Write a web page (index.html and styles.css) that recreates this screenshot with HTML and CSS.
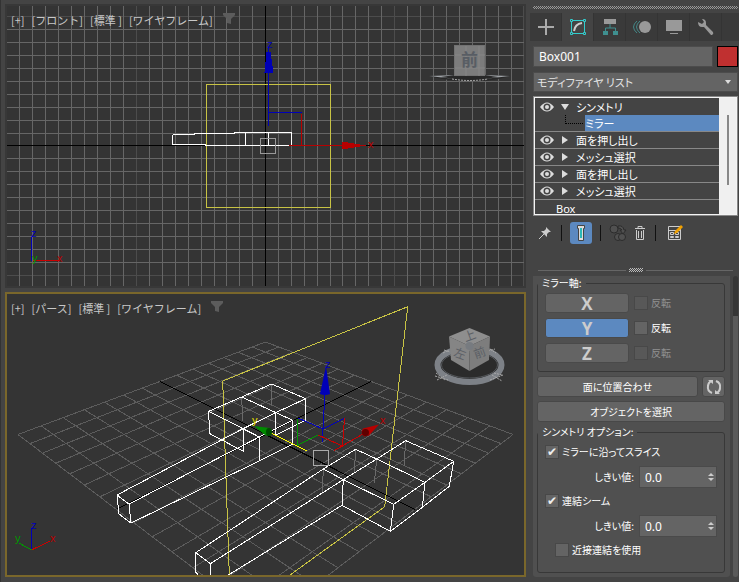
FILE: index.html
```
<!DOCTYPE html>
<html lang="ja">

<head>
    <meta charset="UTF-8">
    <meta name="viewport" content="width=device-width, initial-scale=1.0">
    <title>シンメトリ モディファイヤ</title>
    <link rel="stylesheet" href="styles.css">
</head>

<body>
    <!-- shared icons -->
    <svg class="defs" width="0" height="0" aria-hidden="true">
        <symbol id="funnel" viewBox="0 0 12 12">
            <path d="M0 0h12v2L8 6v5l-4-1V6L0 2z" fill="#5c5c5c" />
        </symbol>
        <symbol id="eye" viewBox="0 0 14 10">
            <path d="M0 5Q7-4 14 5Q7 14 0 5z" fill="#ddd" />
            <circle cx="7" cy="5" r="3.500" fill="#444" />
            <circle cx="7" cy="5" r="2" fill="#ddd" />
        </symbol>
    </svg>

    <main class="views">
        <section class="view">
            <svg class="scene" viewBox="7 6 517 280" preserveAspectRatio="xMidYMid slice">
                <g transform="translate(.5 .5)" fill="none" shape-rendering="crispEdges">
                    <path stroke="#4c4c4c" d="M136 0v300M394 0v300M523 0v300M0 16h540M0 275h540" />
                    <path stroke="#666" d="M19 0v300M32 0v300M45 0v300M58 0v300M71 0v300M84 0v300M97 0v300M110 0v300M123 0v300M149 0v300M162 0v300M175 0v300M188 0v300M201 0v300M214 0v300M226 0v300M239 0v300M252 0v300M278 0v300M291 0v300M304 0v300M317 0v300M330 0v300M342 0v300M355 0v300M368 0v300M381 0v300M407 0v300M420 0v300M433 0v300M446 0v300M459 0v300M472 0v300M485 0v300M498 0v300M511 0v300" />
                    <path stroke="#666" d="M0 29h523M0 42h523M0 55h523M0 68h523M0 81h523M0 94h523M0 107h523M0 120h523M0 133h523M0 158h523M0 171h523M0 184h523M0 197h523M0 210h523M0 223h523M0 236h523M0 249h523M0 262h523" />
                    <path stroke="#000" d="M0 145h524M265 0v300" />
                    <path stroke="#c8c344" d="M206 84h124v123h-124z" />
                    <path stroke="#fff" d="M172 134h22v-1h40v-1h57v13M172 134v10h33v1h83M245 132v13M268 132v13" />
                    <path stroke="#0000b8" d="M268 46v79M268 112h33" />
                    <path stroke="#b80000" d="M301 113v32M288 145h56" />
                    <path stroke="#999" d="M260 138h15v15h-15z" />
                    <path fill="#0000b8" d="M266 51h4l3 21h-9z" />
                    <path fill="#b80000" d="M341 141l24 4-24 4z" />
                    <path stroke="#0000b8" d="M31 236v24" />
                    <path stroke="#c00" d="M32 260h27" />
                </g>
                <g class="axis-label">
                    <text x="267" y="48" fill="#0000b8">z</text>
                    <text x="368" y="148" fill="#b80000">x</text>
                    <text x="31" y="237" fill="#0000b8">z</text>
                    <text x="57" y="262" fill="#b80000">x</text>
                    <text x="32" y="262" fill="#090">y</text>
                </g>
                <!-- view cube, front -->
                <path d="M429 76q40-3 81 0q-18 6-40 5q-24 0-41-5z" fill="#282828" />
                <path d="M429 76l26-1-14 2 14 2zM510 76l-26-1 14 2-14 2z" fill="#a0a4a8" />
                <path d="M452 79q18 3 36 0" fill="none" stroke="#aaa" stroke-dasharray="2 1" />
                <rect x="454.500" y="45.500" width="30" height="30" fill="#7c7c7c" stroke="#727272" />
                <path d="M466 46v30M479 46v30M455 55h30M455 68h30" stroke="#868686" />
                <text class="face" x="461" y="66">前</text>
            </svg>
            <nav class="view-menu">
                <button>[+]</button>
                <button>[フロント]</button>
                <button>[標準 ]</button>
                <button>[ワイヤフレーム]</button>
                <button class="filter" aria-label="フィルタ"><svg width="12" height="12"><use href="#funnel" /></svg></button>
            </nav>
        </section>

        <section class="view active">
            <svg class="scene" viewBox="7 294 517 281" preserveAspectRatio="xMidYMid slice">
                <defs>
                    <path id="rows" d="M18 434.500L265.500 623M41.100 425.800L291.400 603.300M63.200 417.600L315.500 584.900M84.300 409.700L338 567.800M104.400 402.200L359 551.800M123.700 395L378.800 536.700M142.100 388.100L397.300 522.600M176.800 375.200L431.200 496.800M193 369.100L446.700 485M208.700 363.200L461.400 473.800M223.700 357.600L475.300 463.200M238.100 352.200L488.500 453.100M252.100 347L501 443.600M265.500 342L513 434.500" />
                </defs>
                <g fill="none" shape-rendering="crispEdges">
                    <use href="#rows" stroke="#5c5c5c" />
                    <use href="#rows" stroke="#5c5c5c" transform="translate(531) scale(-1 1)" />
                    <path stroke="#000" d="M160 381.500L414.700 509.300M371 381.500L116.500 509.300" />
                    <!-- hidden edges -->
                    <path stroke="#6a6a6a" d="M241.700 397l1 24M271.700 384v21M355.700 449.300l-1.400 23.400M376.700 459l-2.400 23.700M405.700 440.700L404 466M323.300 469l-1 25" />
                    <path stroke="#c8c344" d="M229.300 575L222.700 381 407.700 306.700 384.700 506.700 290 575" />
                    <!-- left leg -->
                    <path stroke="#fff" d="M208.700 411.300L241.700 397 271.700 384 305.700 398.700V420.300L276 435M208.700 411.300L259.300 437M241.700 397L292.700 420.300M305.700 398.700L276 412.500 243 428.700 117 495 129 504 259.300 437 292.700 420.300V444L259.300 461 131 523 119 514 117 495M129 504l2 19M208.700 411.300l.8 22.200 34.200 18V428.700M259.300 437v24M275.700 412.500V435" />
                    <!-- right leg -->
                    <path stroke="#fff" d="M405.700 440.700L453.700 461.300 425 482.300 393.700 504.300 343.300 479.700 323.300 469 355.700 449.300 376.700 459 425 482.300M405.700 440.700L376.700 459 343.300 479.700M453.700 461.300L449.300 486.300 422.300 507.300 390.300 531.300 342 505.300 343.300 479.700M425 482.300L422.300 507.300M393.700 504.300L390.300 531.300M323.300 469L195.700 552.700 210.300 563.700 343.300 479.700M342 505.300L228.300 575M195.700 552.700V572l2.500 3M210.300 563.700V575" />
                    <!-- gizmo -->
                    <path stroke="#0000c0" d="M325 392L322.300 441.700M344 418.500L323 429 298 418" />
                    <path stroke="#090" d="M297.500 418.500V445.300L318 435" />
                    <path stroke="#c00" d="M344.500 418L342.500 446 318 435M334 450.700L363 434" />
                    <path stroke="#ff0" d="M270 432.700L306.700 450.700" />
                    <path stroke="#aaa" d="M313.500 450.500h15v15h-15z" />
                    <path stroke="#0000b8" d="M31.500 528v22" />
                    <path stroke="#c00" d="M31.500 550L50 541" />
                    <path stroke="#090" d="M31.500 550L19 543" />
                </g>
                <path fill="#0000b8" d="M326 366l4 28q-5 2-10 0z" />
                <path fill="#b80000" d="M379 424.500l-16 4q-3 4 1 8l5-1z" />
                <circle cx="365.500" cy="432.500" r="3.500" fill="#600000" />
                <path fill="#008a00" d="M254 426l16 2q3 4-1 8l-4-1z" />
                <ellipse cx="269" cy="432" rx="3" ry="4" fill="#004d00" />
                <g class="axis-label">
                    <text x="325" y="368" fill="#0000b8">z</text>
                    <text x="380" y="424" fill="#b80000">x</text>
                    <text x="252" y="424" fill="#e8e000">y</text>
                    <text x="31" y="529" fill="#0000b8">z</text>
                    <text x="50" y="542" fill="#b80000">x</text>
                    <text x="15" y="542" fill="#090">y</text>
                </g>
                <!-- view cube, perspective -->
                <ellipse cx="469.500" cy="365" rx="32" ry="17" fill="#2b2b2b" stroke="#7d8187" stroke-width="6" />
                <ellipse cx="469.500" cy="365" rx="28" ry="13" fill="none" stroke="#55585c" />
                <g fill="none" stroke="#aaa" stroke-dasharray="2 1">
                    <path d="M435 376l13 4M437 380l10-5M436 373l9 7M490 380l13-5M492 375l10 6M494 373l8 2M444 350l6 2M443 353l6-3M488 351l7-2M490 349l6 4" />
                </g>
                <path fill="#8e8e8e" d="M469.500 328L490 336.500 469.500 346 449 336.500z" />
                <path fill="#858585" d="M449 336.500L469.500 346V371L451 360z" />
                <path fill="#7d7d7d" d="M490 336.500L469.500 346V371L489 360z" />
                <circle cx="469.500" cy="346" r="4" fill="#777b80" />
                <g class="face-small">
                    <text x="464" y="340" transform="rotate(-20 470 337)">上</text>
                    <text x="454" y="358" transform="rotate(20 460 354)">左</text>
                    <text x="474" y="357" transform="rotate(-20 480 354)">前</text>
                </g>
            </svg>
            <nav class="view-menu">
                <button>[+]</button>
                <button>[パース]</button>
                <button>[標準 ]</button>
                <button>[ワイヤフレーム]</button>
                <button class="filter" aria-label="フィルタ"><svg width="12" height="12"><use href="#funnel" /></svg></button>
            </nav>
        </section>
    </main>

    <aside class="panel">
        <div class="grip"></div>
        <nav class="tabs">
            <button aria-label="作成"><svg width="20" height="20"><path d="M10 2v16M2 10h16" stroke="#aaa" stroke-width="2" /></svg></button>
            <button class="on" aria-label="修正"><svg width="20" height="20" fill="none">
                    <path d="M3.500 5v10M16.500 5v10M5 3.500h10M5 16.500h10" stroke="#3cc" />
                    <path d="M2.500 2.500h2v2h-2zM15.500 2.500h2v2h-2zM2.500 15.500h2v2h-2zM15.500 15.500h2v2h-2z" fill="#444" stroke="#3cc" />
                    <path d="M6 14Q7 7 14 6" stroke="#ccc" stroke-width="2" />
                </svg></button>
            <button aria-label="階層"><svg width="20" height="20" fill="none">
                    <path d="M4 2h12v5H4z" fill="#999" />
                    <path d="M10 7v4M5.500 15v-4h10v4" stroke="#3f8f8f" />
                    <path d="M3 14h5v4H3zM13 14h5v4h-5z" fill="#3f8f8f" />
                </svg></button>
            <button aria-label="モーション"><svg width="20" height="20" fill="none">
                    <path d="M5 4Q-2 10 5 16M8 4Q1 10 8 16" stroke="#488" />
                    <circle cx="13" cy="10" r="6" fill="#999" />
                </svg></button>
            <button aria-label="表示"><svg width="20" height="20"><path d="M2 3h16v11H2zM6 16h8v1H6z" fill="#999" /></svg></button>
            <button aria-label="ユーティリティ"><svg width="20" height="20">
                    <path d="M6 2q4 0 4 4v2l7 7q1 2-1 3h-1L8 10H6Q2 10 2 5l4 2 2-2z" fill="#999" />
                </svg></button>
        </nav>

        <div class="name-row">
            <input class="name" type="text" value="Box001" aria-label="オブジェクト名">
            <button class="swatch" aria-label="カラー"></button>
        </div>
        <div class="modifiers">
            <select aria-label="モディファイヤ リスト">
                <option>モディファイヤ リスト</option>
            </select>
        </div>

        <div class="stack">
            <ul class="stack-list">
                <li class="open"><svg width="14" height="10"><use href="#eye" /></svg><i class="down"></i>シンメトリ</li>
                <li class="sub"><span class="branch"></span><span class="selected">ミラー</span></li>
                <li><svg width="14" height="10"><use href="#eye" /></svg><i></i>面を押し出し</li>
                <li><svg width="14" height="10"><use href="#eye" /></svg><i></i>メッシュ選択</li>
                <li><svg width="14" height="10"><use href="#eye" /></svg><i></i>面を押し出し</li>
                <li><svg width="14" height="10"><use href="#eye" /></svg><i></i>メッシュ選択</li>
                <li class="base">Box</li>
            </ul>
            <div class="stack-scroll"></div>
        </div>

        <div class="tools">
            <button aria-label="スタックを固定"><svg width="16" height="16">
                    <path d="M9 2l5 5-2 0-2 2v3L4 6h3l2-2z" fill="#ccc" />
                    <path d="M7 9l-5 5" stroke="#ccc" />
                </svg></button>
            <span class="sep"></span>
            <button class="on" aria-label="最終結果を表示"><svg width="16" height="18">
                    <path d="M4.500 1.500h7v3h-1v12h-5v-12h-1z" fill="#ddd" stroke="#444" />
                    <path d="M7 4h2v10H7z" fill="#2ab8b8" />
                </svg></button>
            <span class="sep"></span>
            <button aria-label="個別にする"><svg width="18" height="18" fill="#505050" stroke="#2c2c2c">
                    <circle cx="5" cy="5" r="4" />
                    <path d="M9 2q5-1 6 4h2l-3 4-3-4h2q-1-2-4-2z" />
                    <circle cx="9" cy="13" r="3.500" />
                    <circle cx="13" cy="13" r="3.500" />
                </svg></button>
            <button aria-label="削除"><svg width="14" height="16" fill="none" stroke="#ccc">
                    <path d="M2 3.500h10M5 3V1.500h4V3M3.500 5v9.500h7V5M5.500 6v7M8.500 6v7" />
                </svg></button>
            <span class="sep"></span>
            <button class="config" aria-label="セットを設定"><svg width="18" height="18" fill="none">
                    <path d="M2.500 2.500h12v13h-12zM2 6.500h13M4.500 8.500h3v2h-3zM9.500 8.500h3v2h-3zM4.500 12.500h3v1h-3zM9.500 12.500h3v1h-3z" stroke="#ccc" />
                    <path d="M8 10l1-3 6-6 2 2-6 6z" fill="#f0a000" />
                </svg></button>
        </div>

        <div class="divider"><span></span></div>

        <div class="rollouts">
            <div class="rollout">
                <fieldset class="mirror">
                    <legend>ミラー軸:</legend>
                    <div class="axis-row off"><button>X</button><input type="checkbox" id="flip-x" disabled><label for="flip-x">反転</label></div>
                    <div class="axis-row"><button class="on">Y</button><input type="checkbox" id="flip-y"><label for="flip-y">反転</label></div>
                    <div class="axis-row off"><button>Z</button><input type="checkbox" id="flip-z" disabled><label for="flip-z">反転</label></div>
                </fieldset>
                <div class="align-row">
                    <button class="btn">面に位置合わせ</button>
                    <button class="btn reset" aria-label="リセット"><svg width="18" height="18" fill="none" stroke="#ccc" stroke-width="2">
                            <path d="M7 15Q2 13 3 8q0-3 3-5M11 3q5 2 4 7 0 3-3 5" />
                            <path d="M3 2h5v4zM15 16h-5v-4z" fill="#ccc" stroke="none" />
                        </svg></button>
                </div>
                <button class="btn">オブジェクトを選択</button>
                <fieldset class="options">
                    <legend>シンメトリ オプション:</legend>
                    <div class="check"><input type="checkbox" id="slice" checked><label for="slice">ミラーに沿ってスライス</label></div>
                    <div class="spin">
                        <label for="slice-limit">しきい値:</label>
                        <span class="spinner"><input type="text" id="slice-limit" value="0.0"><button aria-label="増減"></button></span>
                    </div>
                    <div class="check"><input type="checkbox" id="weld" checked><label for="weld">連結シーム</label></div>
                    <div class="spin">
                        <label for="weld-limit">しきい値:</label>
                        <span class="spinner"><input type="text" id="weld-limit" value="0.0"><button aria-label="増減"></button></span>
                    </div>
                    <div class="check inner"><input type="checkbox" id="near"><label for="near">近接連結を使用</label></div>
                </fieldset>
            </div>
            <div class="scroll"></div>
        </div>
    </aside>
</body>

</html>
```
FILE: styles.css
```
* {
    box-sizing: border-box;
}

body {
    margin: 0;
    height: 100vh;
    display: flex;
    background: #444;
    color: #fff;
    font: 11px/16px "Noto Sans CJK JP", sans-serif;
    font-feature-settings: "palt";
    overflow: hidden;
}

button,
input,
select {
    font: inherit;
    font-feature-settings: inherit;
    color: inherit;
    margin: 0;
    padding: 0;
    border: 0;
    background: none;
}

.defs {
    position: absolute;
}

/* viewports */
.views {
    flex: 1;
    min-width: 0;
    display: grid;
    grid-template-rows: 284fr 285fr;
    gap: 4px;
    padding: 4px 0 5px 4px;
    border-left: 1px solid #333;
}

.view {
    position: relative;
    min-height: 0;
    background: #343434;
    border: 2px solid #383838;
    overflow: hidden;
}

.view.active {
    border-color: #7a672b;
}

.scene {
    display: block;
    width: 100%;
    height: 100%;
}

.axis-label {
    font: 11px "Liberation Sans", sans-serif;
}

.face {
    font-size: 17px;
    font-weight: bold;
    fill: #585d64;
}

.face-small {
    font-size: 12px;
    fill: #5c6066;
}

.view-menu {
    position: absolute;
    top: 6px;
    left: 4px;
    display: flex;
    gap: 7px;
    color: #c8c8c8;
    font-feature-settings: normal;
}

.view-menu .filter {
    margin-left: 3px;
    height: 14px;
}

.view-menu svg {
    display: block;
}

/* command panel */
.panel {
    width: 213px;
    display: flex;
    flex-direction: column;
    padding: 6px 1px 5px 7px;
}

.grip {
    height: 3px;
    background: repeating-conic-gradient(#999 0 25%, #444 0 50%) 0 0 / 2px 2px;
}

.tabs {
    display: flex;
    height: 28px;
    margin: 4px -1px 0 -3px;
    background: #3a3a3a;
}

.tabs button {
    width: 32px;
    display: grid;
    place-items: center;
    border-right: 1px solid #343434;
}

.tabs .on {
    background: #444;
}

.name-row {
    display: flex;
    gap: 4px;
    margin-top: 5px;
}

.name {
    flex: 1;
    min-width: 0;
    height: 21px;
    padding: 0 5px;
    background: #646464;
    border: 1px solid #4c4c4c;
    font: 12px "Noto Sans", sans-serif;
}

.swatch {
    width: 21px;
    background: #c03030;
    border: 1px solid #000;
}

.modifiers {
    display: flex;
    align-items: center;
    height: 20px;
    margin-top: 5px;
    padding-right: 6px;
    background: #646464;
    border: 1px solid #4c4c4c;
    color: #e4e4e4;
}

.modifiers select {
    appearance: none;
    flex: 1;
    height: 18px;
    padding-left: 3px;
}

.modifiers::after {
    content: "";
    border: 3px solid transparent;
    border-top: 4px solid #ddd;
    border-bottom: 0;
}

.stack {
    display: flex;
    height: 120px;
    margin-top: 4px;
    border: 2px solid #f4f4f4;
    outline: 1px solid #888;
    outline-offset: -1px;
    overflow: hidden;
}

.stack-list {
    flex: 1;
    margin: 0;
    padding: 0;
    list-style: none;
}

.stack-list li {
    display: flex;
    align-items: center;
    height: 17px;
    padding-left: 5px;
    border-bottom: 1px solid #888;
}

.stack-list .open {
    border: 0;
}

.stack-list .sub {
    align-items: stretch;
    padding-left: 30px;
}

.stack-list .base {
    padding-left: 21px;
    border: 0;
    font-family: "Noto Sans", sans-serif;
}

.stack-list i {
    margin: 0 8px 0 8px;
    border: 4px solid transparent;
    border-left: 6px solid #ddd;
    border-right: 0;
}

.stack-list i.down {
    margin: 0 7px;
    border: 4px solid transparent;
    border-top: 6px solid #ddd;
    border-bottom: 0;
}

.branch {
    width: 18px;
    height: 9px;
    margin-right: 2px;
    border: dotted #000;
    border-width: 0 0 1px 1px;
}

.selected {
    flex: 1;
    background: #5c89c0;
}

.stack-scroll {
    width: 17px;
    background: linear-gradient(#888, #888) no-repeat 8px 17px / 2px 70px, #f0f0f0;
}

.tools {
    display: flex;
    align-items: center;
    justify-content: flex-start;
    gap: 6px;
    height: 24px;
    margin-top: 5px;
    padding-left: 4px;
}

.tools button {
    display: grid;
    place-items: center;
}

.tools .on {
    width: 22px;
    height: 22px;
    background: #5c89c0;
    border-radius: 3px;
}

.tools .sep {
    width: 1px;
    height: 16px;
    margin: 0 2px;
    background: #111;
}

.tools .config {
    margin-left: 2px;
}

.divider {
    display: flex;
    align-items: center;
    gap: 3px;
    margin: 23px 5px 4px;
}

.divider::before,
.divider::after {
    content: "";
    flex: 1;
    height: 1px;
    background: #666;
}

.divider span {
    width: 14px;
    height: 4px;
    background: repeating-conic-gradient(#bbb 0 25%, #444 0 50%) 0 0 / 2px 2px;
}

/* rollout */
.rollouts {
    flex: 1;
    display: flex;
    gap: 3px;
    font-size: 10px;
}

.rollout {
    flex: 1;
    display: flex;
    flex-direction: column;
    gap: 4px;
    padding: 0 5px 4px 4px;
    background: #505050;
    border-radius: 0 0 3px 3px;
}

.scroll {
    width: 5px;
    border-radius: 3px;
    background: linear-gradient(#363636 40px, #5a5a5a 40px);
}

fieldset {
    min-width: 0;
    margin: 0;
    border: 1px solid #383838;
    border-radius: 3px;
    padding: 0 7px;
}

legend {
    padding: 0 4px;
    margin-left: -7px;
    line-height: 14px;
}

.mirror {
    padding-bottom: 8px;
}

.axis-row {
    display: flex;
    align-items: center;
    height: 20px;
    margin-top: 5px;
}

legend + .axis-row {
    margin-top: 3px;
}

.axis-row button {
    width: 84px;
    height: 20px;
    margin-right: 5px;
    background: #646464;
    border: 1px solid #4a4a4a;
    border-radius: 3px;
    color: #ccc;
    font: bold 17px/17px "Open Sans", sans-serif;
}

.axis-row .on {
    background: #5c89c0;
}

.axis-row.off label {
    color: #909090;
}

input[type="checkbox"] {
    appearance: none;
    width: 14px;
    height: 14px;
    margin-right: 3px;
    background: #646464;
    border: 1px solid #484848;
}

input[type="checkbox"]:disabled {
    background: #585858;
}

input[type="checkbox"]:checked::after {
    content: "✔";
    display: block;
    color: #eee;
    font: 12px/12px "DejaVu Sans", sans-serif;
    text-align: center;
}

.align-row {
    display: flex;
    gap: 4px;
}

.btn {
    flex: 1;
    min-height: 21px;
    background: #646464;
    border: 1px solid #484848;
    border-radius: 3px;
}

.rollout > .btn {
    flex: none;
}

.btn.reset {
    flex: none;
    width: 23px;
    display: grid;
    place-items: center;
}

.options {
    flex: 1;
    margin-top: -1px;
}

.check {
    display: flex;
    align-items: center;
    height: 16px;
    margin-top: 5px;
}

.check.inner {
    margin-left: 10px;
}

.spin {
    display: flex;
    align-items: center;
    justify-content: flex-end;
    gap: 5px;
    margin-top: 6px;
}

.spinner {
    display: flex;
    width: 78px;
    height: 22px;
    background: #646464;
    border: 1px solid #4a4a4a;
}

.spinner input {
    flex: 1;
    min-width: 0;
    padding-left: 5px;
    font: 12px "Noto Sans", sans-serif;
}

.spinner button {
    width: 11px;
    display: flex;
    flex-direction: column;
    align-items: center;
    justify-content: center;
    gap: 2px;
}

.spinner button::before,
.spinner button::after {
    content: "";
    width: 0;
    border: 3px solid transparent;
    border-top: 0;
    border-bottom: 3px solid #ccc;
}

.spinner button::after {
    border-bottom: 0;
    border-top: 3px solid #ccc;
}
```
